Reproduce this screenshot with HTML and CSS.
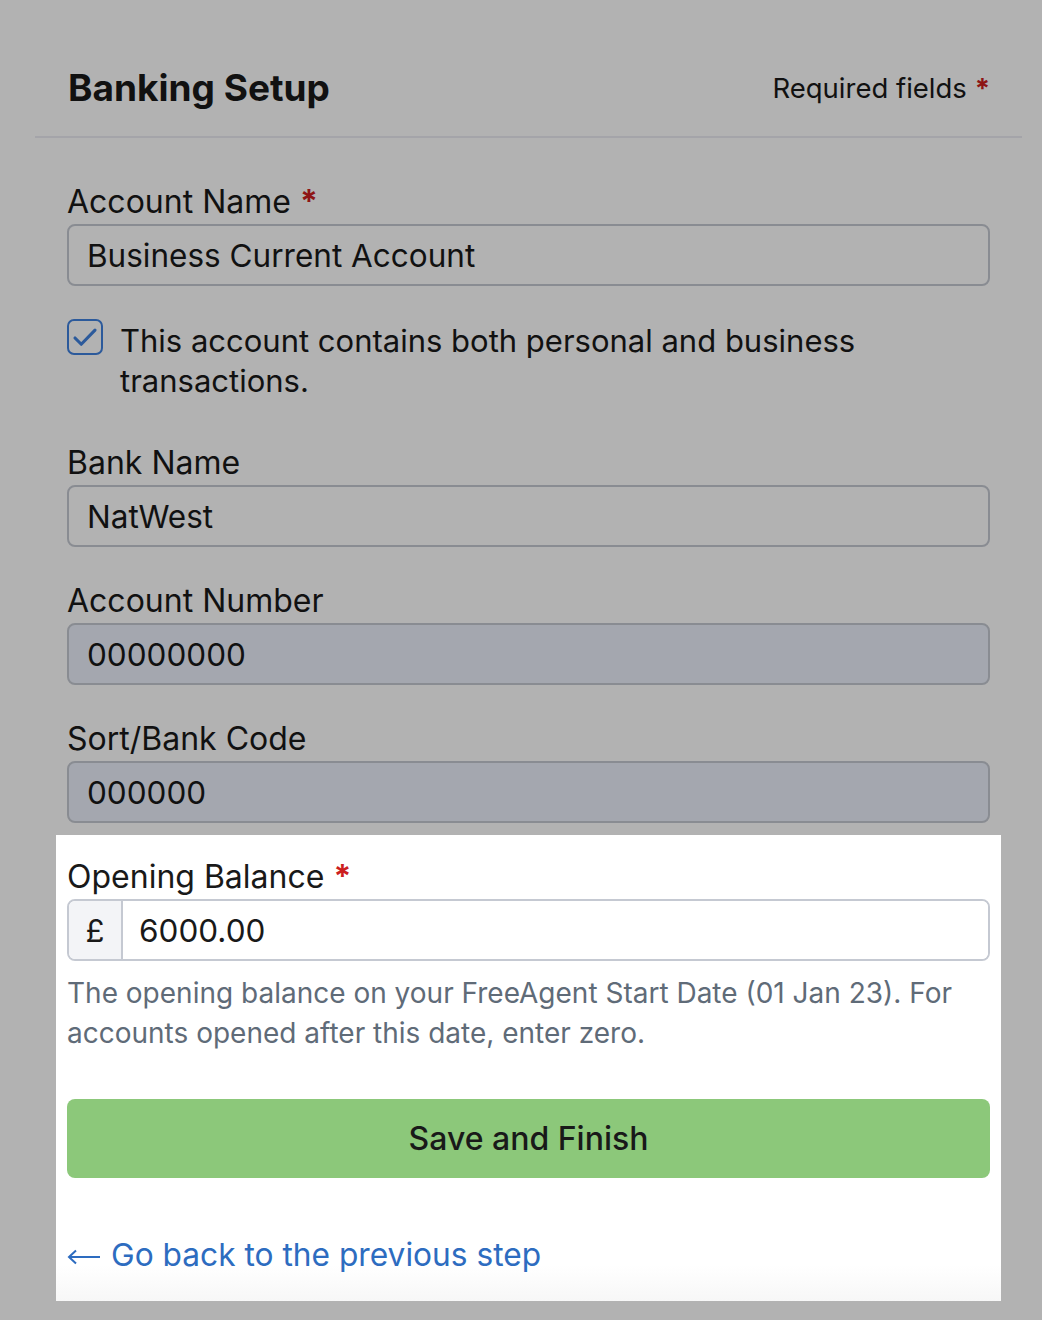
FILE: index.html
```html
<!DOCTYPE html>
<html lang="en">
<head>
    <meta charset="UTF-8">
    <meta name="viewport" content="width=device-width, initial-scale=1.0">
    <title>Banking Setup</title>
    <link rel="stylesheet" href="styles.css">
</head>
<body>
    <div class="card">
        <!-- Header -->
        <div class="card-header">
            <h1>Banking Setup</h1>
            <span class="required-note">Required fields <span class="req">*</span></span>
        </div>

        <form class="setup-form">
            <div class="field">
                <label for="accountName">Account Name <span class="req">*</span></label>
                <input type="text" id="accountName" value="Business Current Account">
            </div>

            <label class="check">
                <span class="check-box">
                    <svg viewBox="0 0 24 24" width="30" height="30"><path d="M4 12.8l5 5L20 6.5" fill="none" stroke="currentColor" stroke-width="2.5" stroke-linecap="round" stroke-linejoin="round"/></svg>
                </span>
                <span>This account contains both personal and business transactions.</span>
            </label>

            <div class="field">
                <label for="bankName">Bank Name</label>
                <input type="text" id="bankName" value="NatWest">
            </div>

            <div class="field">
                <label for="accountNumber">Account Number</label>
                <input type="text" id="accountNumber" class="locked" value="00000000" readonly>
            </div>

            <div class="field">
                <label for="sortCode">Sort/Bank Code</label>
                <input type="text" id="sortCode" class="locked" value="000000" readonly>
            </div>

            <!-- Highlighted step -->
            <div class="spotlight">
                <div class="field">
                    <label for="openingBalance">Opening Balance <span class="req">*</span></label>
                    <div class="input-group">
                        <span class="prefix">£</span>
                        <input type="text" id="openingBalance" value="6000.00">
                    </div>
                    <p class="hint">The opening balance on your FreeAgent Start Date (01 Jan 23). For accounts opened after this date, enter zero.</p>
                </div>

                <button type="submit" class="btn-save">Save and Finish</button>

                <a href="#" class="back-link">
                    <svg class="arrow" viewBox="0 0 34 20" width="34" height="20" aria-hidden="true"><path d="M33 10H2M9 3.5L2 10l7 6.5" fill="none" stroke="currentColor" stroke-width="2"/></svg>
                    Go back to the previous step
                </a>
            </div>
        </form>
    </div>
</body>
</html>
```

FILE: styles.css
```css
* {
    margin: 0;
    padding: 0;
    box-sizing: border-box;
}

body {
    background: #fff;
    font-family: 'Inter', 'Noto Sans', sans-serif;
    color: #191919;
    padding: 0 20px 0 35px;
    min-height: 1320px;
    overflow: hidden;
}

.card {
    background: #fff;
}

.card-header {
    display: flex;
    justify-content: space-between;
    align-items: center;
    padding: 65px 32px 25px 33px;
    border-bottom: 2px solid #ebebf3;
}

.card-header h1 {
    font-size: 37px;
    line-height: 46px;
    font-weight: 700;
}

.required-note {
    font-size: 27.5px;
}

.req {
    color: #cc1f1f;
    font-weight: 700;
}

.setup-form {
    padding: 44px 32px 0 32px;
}

.field {
    margin-bottom: 34px;
}

.field label {
    display: block;
    font-size: 32px;
    line-height: 40px;
    margin-bottom: 2px;
}

.field input {
    width: 100%;
    height: 62px;
    padding: 0 18px;
    border: 2px solid #c5c9d2;
    border-radius: 8px;
    font-family: inherit;
    font-size: 31.5px;
    color: #191919;
    background: #fff;
}

.field input.locked {
    background: #ebf0fb;
}

.check {
    display: flex;
    align-items: flex-start;
    gap: 17px;
    font-size: 31px;
    line-height: 40px;
    margin: 35px 0 42px;
}

.check-box {
    flex: none;
    width: 36px;
    height: 36px;
    margin-top: -2px;
    border: 2px solid #4082df;
    border-radius: 7px;
    color: #4082df;
    display: flex;
    align-items: center;
    justify-content: center;
}

.spotlight {
    position: relative;
    z-index: 1;
    margin: -22px -11px 0;
    padding: 22px 11px 26px;
    background: linear-gradient(#fff calc(100% - 36px), #f7f7f7);
    box-shadow: 0 0 0 3000px rgba(0, 0, 0, 0.3);
}

.spotlight .field {
    margin-bottom: 46px;
}

.input-group {
    display: flex;
    height: 62px;
    border: 2px solid #c5c9d2;
    border-radius: 8px;
    overflow: hidden;
}

.input-group .prefix {
    width: 54px;
    display: flex;
    align-items: center;
    justify-content: center;
    background: #f3f4f7;
    border-right: 2px solid #c5c9d2;
    font-size: 31px;
}

.input-group input {
    flex: 1;
    height: 100%;
    border: none;
    border-radius: 0;
    padding: 0 16px;
}

.hint {
    margin-top: 12px;
    font-size: 28px;
    line-height: 40px;
    color: #5f6b78;
}

.btn-save {
    display: block;
    width: 100%;
    height: 79px;
    border: none;
    border-radius: 8px;
    background: #8cc87a;
    font-family: inherit;
    font-size: 32px;
    font-weight: 500;
    color: #191919;
    cursor: pointer;
}

.back-link {
    display: flex;
    align-items: center;
    gap: 10px;
    margin-top: 57px;
    font-size: 31.7px;
    line-height: 40px;
    color: #2d6cc0;
    text-decoration: none;
}

.back-link .arrow {
    margin-top: 4px;
}
```
